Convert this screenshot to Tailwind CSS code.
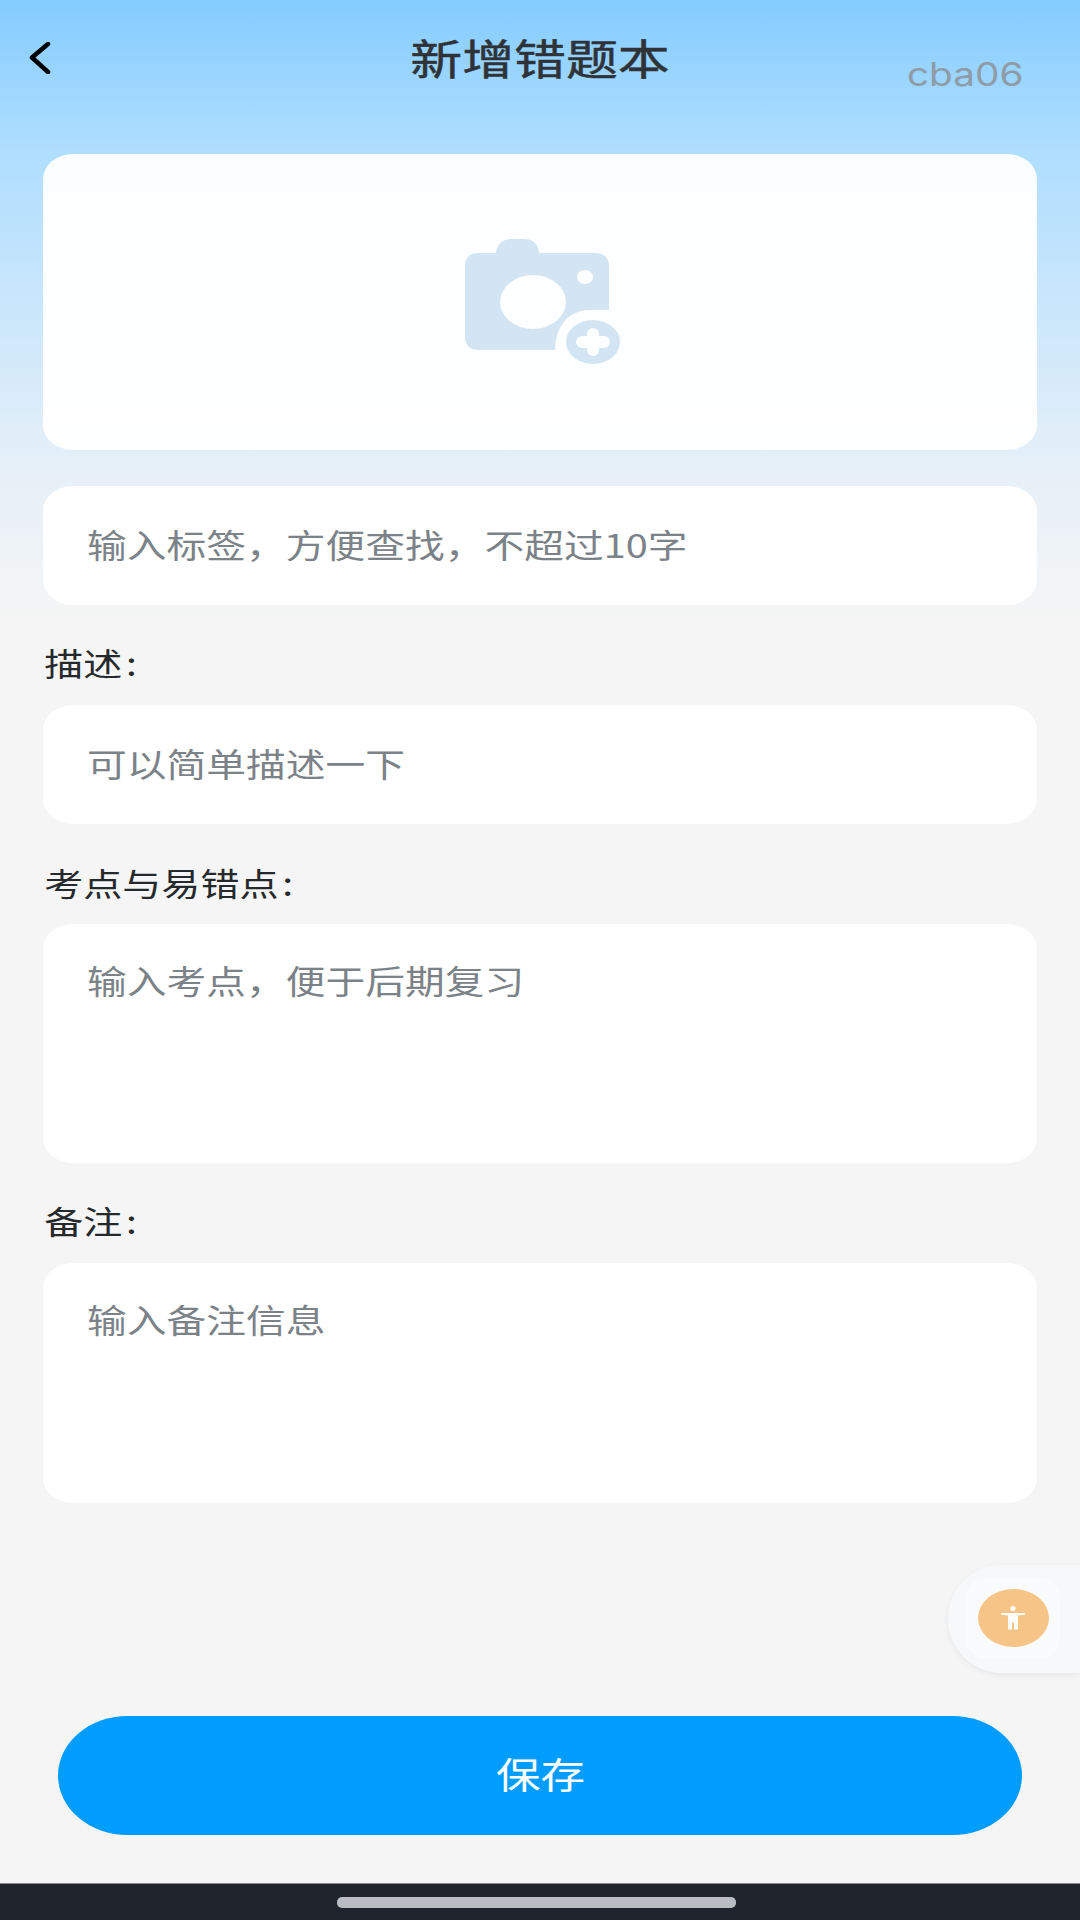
<!DOCTYPE html>
<html lang="zh">
<head>
<meta charset="utf-8">
<script src="https://cdn.jsdelivr.net/npm/@tailwindcss/browser@4"></script>
</head>
<body>
<div class="relative w-[1080px] h-[1920px] overflow-hidden flex flex-col bg-[linear-gradient(180deg,#84ccff_0px,#afdeff_150px,#e6f0f8_470px,#f5f5f5_620px,#f5f5f5_100%)] font-['Noto_Sans_CJK_SC','Noto_Sans',sans-serif]">
  <header class="relative h-[154px] shrink-0">
    <div class="flex items-start justify-between px-[29px] pt-[42px]">
      <svg width="24" height="32" viewBox="0 0 24 32" fill="none" stroke="#000" stroke-width="4.5" stroke-linecap="round" stroke-linejoin="round"><path d="M19 2 L3 15.5 L19 30"/></svg>
    </div>
    <h1 class="absolute left-0 right-0 top-[29px] text-center text-[42px] leading-[56px] font-normal text-[#2f3338] [-webkit-text-stroke:0.5px_#2f3338] scale-x-[1.235]">新增错题本</h1>
    <span class="absolute left-[907px] top-[55px] origin-left scale-x-[1.21] font-['Inter',sans-serif] text-[32px] leading-[40px] text-[#8f9ba5]">cba06</span>
  </header>

  <main class="flex flex-col px-[43px]">
    <div class="h-[296px] rounded-[30px/25px] bg-white/95 flex items-center justify-center">
      <svg class="ml-[3px]" width="160" height="130" viewBox="462 237 160 130">
        <path fill="#d3e5f3" d="M478 253 H496 C497 243 504 239 512 239 H524 C532 239 538 243 539 253 H596 C604 253 609 258 609 266 V310 H478 C470 310 465 305 465 297 V266 C465 258 470 253 478 253 Z"/>
        <path fill="#d3e5f3" d="M465 290 H609 V310 H590 C568 310 556 326 555 350 H478 C470 350 465 345 465 337 Z"/>
        <ellipse cx="533" cy="302" rx="33" ry="27" fill="#fdfeff"/>
        <ellipse cx="585" cy="277" rx="8" ry="7" fill="#fdfeff"/>
        <ellipse cx="593" cy="342" rx="27" ry="22" fill="#d3e5f3"/>
        <path stroke="#fdfeff" stroke-width="12" stroke-linecap="round" fill="none" d="M582 342 H604 M593 334 V350"/>
      </svg>
    </div>

    <div class="mt-[36px] h-[119px] rounded-[30px/25px] bg-white flex items-center pl-[44px] pb-[4px]">
      <span class="origin-left scale-x-[1.22] text-[32.6px] leading-[40px] text-[#7b8288] whitespace-nowrap">输入标签，方便查找，不超过10字</span>
    </div>

    <label class="mt-[37px] mb-[23px] h-[40px] block text-[32px] leading-[40px] text-[#26292c]"><span class="inline-block origin-left scale-x-[1.22] pl-[1px]">描述<span class="ml-[3px]">:</span></span></label>
    <div class="h-[119px] rounded-[30px/25px] bg-white flex items-center pl-[44px] pb-[4px]">
      <span class="origin-left scale-x-[1.22] text-[32.6px] leading-[40px] text-[#7b8288] whitespace-nowrap">可以简单描述一下</span>
    </div>

    <label class="mt-[38px] mb-[22px] h-[40px] block text-[32px] leading-[40px] text-[#26292c]"><span class="inline-block origin-left scale-x-[1.22] pl-[1px]">考点与易错点<span class="ml-[3px]">:</span></span></label>
    <div class="h-[239px] rounded-[30px/25px] bg-white pl-[44px] pt-[36px]">
      <span class="block origin-left scale-x-[1.22] text-[32.6px] leading-[40px] text-[#7b8288] whitespace-nowrap">输入考点，便于后期复习</span>
    </div>

    <label class="mt-[37px] mb-[23px] h-[40px] block text-[32px] leading-[40px] text-[#26292c]"><span class="inline-block origin-left scale-x-[1.22] pl-[1px]">备注<span class="ml-[3px]">:</span></span></label>
    <div class="h-[240px] rounded-[30px/25px] bg-white pl-[44px] pt-[36px]">
      <span class="block origin-left scale-x-[1.22] text-[32.6px] leading-[40px] text-[#7b8288] whitespace-nowrap">输入备注信息</span>
    </div>
  </main>

  <div class="mt-auto px-[58px] pb-[48px]">
    <button class="w-full h-[119px] rounded-[70px/60px] bg-[#009dff] text-white text-[36.5px] leading-[48px] flex items-center justify-center pb-[4px]"><span class="scale-x-[1.22]">保存</span></button>
  </div>

  <div class="h-[37px] shrink-0 bg-[#20242c] border-t border-[#8a8d92] flex items-center justify-center">
    <div class="w-[399px] h-[11px] rounded-[5px] bg-[#b9bcc0] mr-[7px]"></div>
  </div>

  <div class="absolute left-[948px] top-[1565px] w-[132px] h-[108px] rounded-l-[55px] bg-[#f7f8f9] shadow-[0_2px_6px_rgba(0,0,0,0.06)]">
    <div class="absolute left-[18px] top-[13px] w-[94px] h-[80px] rounded-[20px] bg-[#fafbfc] flex items-center justify-center">
      <div class="w-[71px] h-[58px] rounded-[50%] bg-[#f5c486] flex items-center justify-center">
        <svg width="26" height="28" viewBox="0 0 26 28" fill="#fff"><circle cx="13" cy="4.5" r="2.6"/><path d="M1 9 H25 V10.5 L18 11.5 V25.5 H14 V18.5 H12 V25.5 H8 V11.5 L1 10.5 Z"/></svg>
      </div>
    </div>
  </div>
</div>
</body>
</html>
